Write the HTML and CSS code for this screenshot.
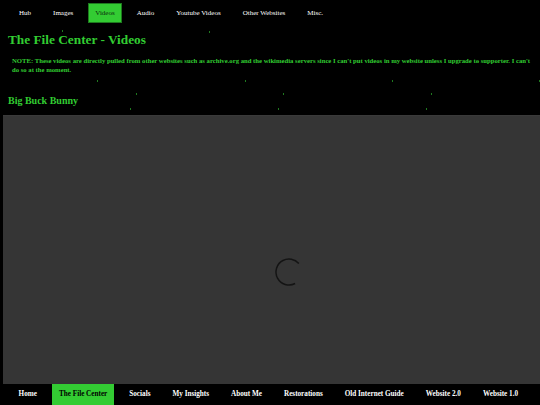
FILE: index.html
```html
<!DOCTYPE html>
<html lang="en">
<head>
<meta charset="utf-8">
<title>The File Center - Videos</title>
<link rel="stylesheet" href="styles.css">
</head>
<body>
<nav class="topnav">
  <a href="#">Hub</a>
  <a href="#">Images</a>
  <a href="#" class="active">Videos</a>
  <a href="#">Audio</a>
  <a href="#">Youtube Videos</a>
  <a href="#">Other Websites</a>
  <a href="#">Misc.</a>
</nav>
<main class="content">
  <h1 class="title">The File Center - Videos</h1>
  <p class="note">NOTE: These videos are directly pulled from other websites such as archive.org and the wikimedia servers since I can't put videos in my website unless I upgrade to supporter. I can't do so at the moment.</p>
  <h2 class="video-title">Big Buck Bunny</h2>
  <div class="player">
    <svg class="spinner" width="30" height="30" viewBox="0 0 30 30">
      <circle cx="15" cy="15" r="13" fill="none" stroke="#141414" stroke-width="1.5" stroke-dasharray="57.9 100" transform="rotate(62 15 15)"/>
    </svg>
  </div>
</main>
<div class="rain">
  <i style="left:62px;top:30px"></i>
  <i style="left:209px;top:31px"></i>
  <i style="left:181px;top:61px"></i>
  <i style="left:477px;top:61px"></i>
  <i style="left:97px;top:80px"></i>
  <i style="left:245px;top:80px"></i>
  <i style="left:392px;top:80px"></i>
  <i style="left:539px;top:80px"></i>
  <i style="left:136px;top:93px"></i>
  <i style="left:283px;top:93px"></i>
  <i style="left:431px;top:93px"></i>
  <i style="left:130px;top:108px"></i>
  <i style="left:278px;top:108px"></i>
  <i style="left:426px;top:108px"></i>
</div>
<nav class="bottomnav">
  <a href="#">Home</a>
  <a href="#" class="active">The File Center</a>
  <a href="#">Socials</a>
  <a href="#">My Insights</a>
  <a href="#">About Me</a>
  <a href="#">Restorations</a>
  <a href="#">Old Internet Guide</a>
  <a href="#">Website 2.0</a>
  <a href="#">Website 1.0</a>
</nav>
</body>
</html>
```
FILE: styles.css
```css
html, body {
  margin: 0;
  padding: 0;
  background: #000;
  overflow: hidden;
  height: 405px;
}
body {
  font-family: "Liberation Serif", "Times New Roman", serif;
  color: #32cd32;
  position: relative;
}
.topnav {
  display: flex;
  gap: 7px;
  padding: 3px 0 0 11.5px;
  height: 20px;
}
.topnav a {
  display: block;
  padding: 0 7.5px;
  height: 20px;
  line-height: 20px;
  font-size: 7px;
  font-weight: normal;
  color: #fff;
  text-decoration: none;
  box-sizing: border-box;
}
.topnav a.active {
  background: #33cc33;
  color: #0b2a0b;
  border: 1px solid #1e7a1e;
  line-height: 18px;
  padding: 0 6.5px;
}
.title {
  margin: 9px 0 0 8px;
  font-size: 13.3px;
  line-height: 16px;
  font-weight: bold;
  color: #32cd32;
}
.note {
  margin: 8px 8px 0 12px;
  font-size: 6.7px;
  line-height: 9.3px;
  font-weight: bold;
  color: #32cd32;
}
.video-title {
  margin: 20px 0 0 8px;
  font-size: 10px;
  line-height: 12px;
  font-weight: bold;
  color: #32cd32;
}
.player {
  margin: 8px 0 0 3px;
  width: 545px;
  height: 280px;
  background: #353535;
  border-top: 1px solid #3a3a3a;
  display: flex;
  align-items: flex-start;
  justify-content: flex-start;
  padding: 141px 0 0 271px;
  box-sizing: border-box;
}
.rain i {
  position: absolute;
  width: 1px;
  height: 2px;
  background: #1f7a1f;
}
.bottomnav {
  position: absolute;
  left: 0;
  right: 0;
  bottom: 0;
  height: 21px;
  background: #000;
  display: flex;
  gap: 8px;
  padding-left: 11.6px;
}
.bottomnav a {
  display: block;
  padding: 0 7px;
  height: 21px;
  line-height: 21px;
  font-size: 7.2px;
  font-weight: bold;
  color: #fff;
  text-decoration: none;
}
.bottomnav a.active {
  background: #33cc33;
  color: #000;
}
```
